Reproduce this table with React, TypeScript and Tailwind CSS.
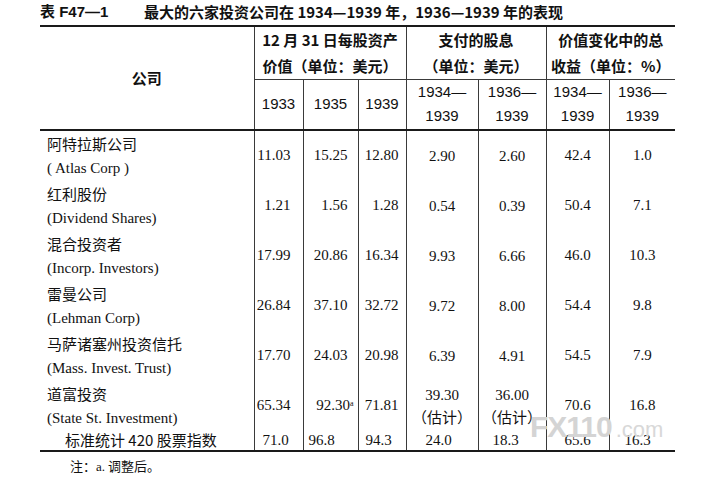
import React from 'react'

const cjk = '"Noto Sans CJK SC", "Liberation Sans", sans-serif'
const serif = '"Liberation Serif", "Noto Sans CJK SC", serif'
const sans = '"Liberation Sans", "Noto Sans CJK SC", sans-serif'

type Row = {
  zh: string
  en: string
  v: [string, string, string]
  d: [string, string]
  g: [string, string]
  note?: boolean
}

const rows: Row[] = [
  { zh: '阿特拉斯公司', en: '( Atlas Corp )', v: ['11.03', '15.25', '12.80'], d: ['2.90', '2.60'], g: ['42.4', '1.0'] },
  { zh: '红利股份', en: '(Dividend Shares)', v: ['1.21', '1.56', '1.28'], d: ['0.54', '0.39'], g: ['50.4', '7.1'] },
  { zh: '混合投资者', en: '(Incorp. Investors)', v: ['17.99', '20.86', '16.34'], d: ['9.93', '6.66'], g: ['46.0', '10.3'] },
  { zh: '雷曼公司', en: '(Lehman Corp)', v: ['26.84', '37.10', '32.72'], d: ['9.72', '8.00'], g: ['54.4', '9.8'] },
  { zh: '马萨诸塞州投资信托', en: '(Mass. Invest. Trust)', v: ['17.70', '24.03', '20.98'], d: ['6.39', '4.91'], g: ['54.5', '7.9'] },
  { zh: '道富投资', en: '(State St. Investment)', v: ['65.34', '92.30', '71.81'], d: ['39.30', '36.00'], g: ['70.6', '16.8'], note: true },
]

const vline = 'border-l border-[#3a3a3a]'

function Years({ a, b }: { a: string; b: string }) {
  return (
    <th className={`${vline} font-normal text-center leading-[24px]`} style={{ fontFamily: sans }}>
      {a}
      <br />
      {b}
    </th>
  )
}

export default function App() {
  return (
    <div className="relative w-[704px] h-[477px] bg-white text-[#111] overflow-hidden">
      <div className="h-[25px] flex items-center pl-[40px] text-[15px] font-bold" style={{ fontFamily: cjk }}>
        <span className="w-[104px]" style={{ fontFamily: sans }}>表 F47—1</span>
        <span>最大的六家投资公司在 1934—1939 年，1936—1939 年的表现</span>
      </div>

      <table className="ml-[40px] w-[635px] table-fixed border-collapse border-t-2 border-b-2 border-[#1a1a1a] text-[15px]">
        <colgroup>
          <col className="w-[214px]" />
          <col className="w-[49px]" />
          <col className="w-[55px]" />
          <col className="w-[48px]" />
          <col className="w-[72px]" />
          <col className="w-[68px]" />
          <col className="w-[63px]" />
          <col className="w-[66px]" />
        </colgroup>
        <thead className="border-b-2 border-[#1a1a1a]" style={{ fontFamily: cjk }}>
          <tr className="h-[48px]">
            <th rowSpan={2} className="font-bold text-center">公司</th>
            <th colSpan={3} className={`${vline} border-b font-bold text-center leading-[26px] whitespace-nowrap`}>
              12 月 31 日每股资产
              <br />
              价值（单位：美元）
            </th>
            <th colSpan={2} className={`${vline} border-b font-bold text-center leading-[26px] whitespace-nowrap`}>
              支付的股息
              <br />
              （单位：美元）
            </th>
            <th colSpan={2} className={`${vline} border-b font-bold text-center leading-[26px] whitespace-nowrap`}>
              价值变化中的总
              <br />
              收益（单位：%）
            </th>
          </tr>
          <tr className="h-[50px]">
            <th className={`${vline} font-normal text-center`} style={{ fontFamily: sans }}>1933</th>
            <th className={`${vline} font-normal text-center`} style={{ fontFamily: sans }}>1935</th>
            <th className={`${vline} font-normal text-center`} style={{ fontFamily: sans }}>1939</th>
            <Years a="1934—" b="1939" />
            <Years a="1936—" b="1939" />
            <Years a="1934—" b="1939" />
            <Years a="1936—" b="1939" />
          </tr>
        </thead>
        <tbody style={{ fontFamily: serif }}>
          {rows.map((r) => (
            <tr key={r.en} className="h-[50px]">
              <td className="pl-[7px] leading-[25px] whitespace-nowrap">
                <div style={{ fontFamily: cjk }}>{r.zh}</div>
                <div>{r.en}</div>
              </td>
              <td className={`${vline} text-right pr-[12px]`}>{r.v[0]}</td>
              <td className={`${vline} text-right pr-[10px] whitespace-nowrap`}>
                {r.v[1]}
                {r.note && <sup className="text-[8px] -mr-[6px]">a</sup>}
              </td>
              <td className={`${vline} text-right pr-[7px]`}>{r.v[2]}</td>
              {r.d.map((x, i) => (
                <td key={i} className={`${vline} text-center leading-[22px]`}>
                  {x}
                  {r.note && (
                    <div style={{ fontFamily: cjk }}>（估计）</div>
                  )}
                </td>
              ))}
              <td className={`${vline} text-center`}>{r.g[0]}</td>
              <td className={`${vline} text-center`}>{r.g[1]}</td>
            </tr>
          ))}
          <tr className="h-[20px] leading-[18px]">
            <td className="pl-[25px] whitespace-nowrap" style={{ fontFamily: cjk }}>标准统计 420 股票指数</td>
            <td className={`${vline} pl-[8px]`}>71.0</td>
            <td className={`${vline} pl-[5px]`}>96.8</td>
            <td className={`${vline} pl-[7px]`}>94.3</td>
            <td className={`${vline} pl-[19px]`}>24.0</td>
            <td className={`${vline} pl-[14px]`}>18.3</td>
            <td className={`${vline} pl-[18px]`}>65.6</td>
            <td className={`${vline} pl-[15px]`}>16.3</td>
          </tr>
        </tbody>
      </table>

      <div className="pl-[70px] pt-[4px] text-[13px]" style={{ fontFamily: cjk }}>
        注：<span style={{ fontFamily: serif }}>a.</span> 调整后。
      </div>

      <div className="absolute left-[530px] top-[404px] flex items-baseline text-[#d4d4d4] select-none">
        <span className="text-[30px] font-bold tracking-[-1px]" style={{ fontFamily: sans }}>FX110</span>
        <span className="ml-[4px] text-[22px] text-[#d8d8d8]" style={{ fontFamily: sans }}>.com</span>
      </div>
    </div>
  )
}
